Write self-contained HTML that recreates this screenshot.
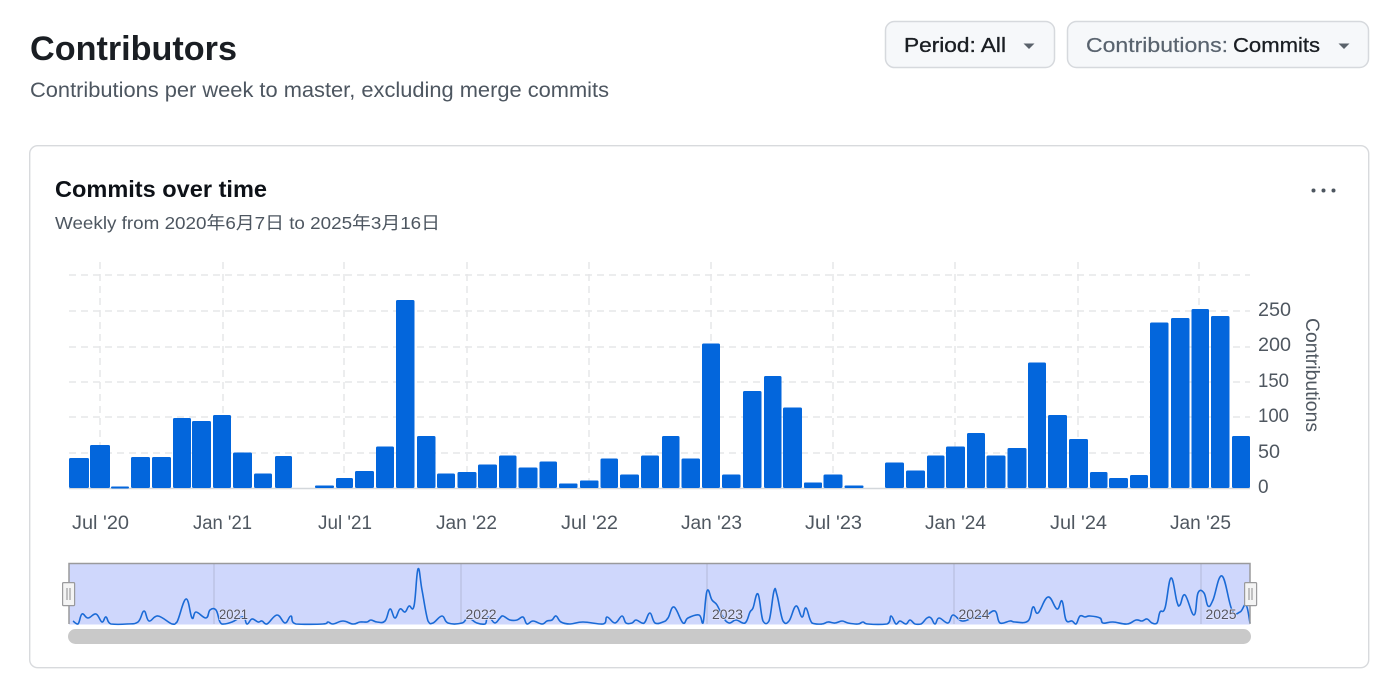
<!DOCTYPE html>
<html><head><meta charset="utf-8"><title>Contributors</title>
<style>
html,body{margin:0;padding:0;background:#fff;width:1400px;height:678px;overflow:hidden}
svg{display:block}
text{font-family:"Liberation Sans","Noto Sans CJK JP",sans-serif}
.ax{font-size:19px;fill:#4f5760}
.g{stroke:#e6e7e9;stroke-width:1.5;stroke-dasharray:7 5;fill:none}
.b rect{fill:#0366dc}
.yr{font-size:14px;fill:#55555f;paint-order:stroke;stroke:#dfe4fd;stroke-width:1.5px}
</style></head><body>
<svg width="1400" height="678" viewBox="0 0 1400 678" xmlns="http://www.w3.org/2000/svg">
<rect width="1400" height="678" fill="#fff"/>
<text x="30" y="60" font-size="34" font-weight="700" fill="#1a1e23" textLength="207" lengthAdjust="spacingAndGlyphs">Contributors</text>
<text x="30" y="97" font-size="21" fill="#4d5660" textLength="579" lengthAdjust="spacingAndGlyphs">Contributions per week to master, excluding merge commits</text>

<rect x="885.5" y="21.5" width="169" height="46" rx="9" fill="#f6f8fa" stroke="#d6d9dd" stroke-width="1.5"/>
<text x="904" y="52" font-size="20.5" fill="#1a1e23" stroke="#1a1e23" stroke-width=".35" textLength="102" lengthAdjust="spacingAndGlyphs">Period: All</text>
<path d="M1023.5 43.5h11l-5.5 5.5z" fill="#5a626b"/>
<rect x="1067.5" y="21.5" width="301" height="46" rx="9" fill="#f6f8fa" stroke="#d6d9dd" stroke-width="1.5"/>
<text x="1086" y="52" font-size="20.5" fill="#59636e" stroke="#59636e" stroke-width=".2" textLength="142" lengthAdjust="spacingAndGlyphs">Contributions:</text>
<text x="1233" y="52" font-size="20.5" fill="#1a1e23" stroke="#1a1e23" stroke-width=".3" textLength="87" lengthAdjust="spacingAndGlyphs">Commits</text>
<path d="M1338.5 43.5h11l-5.500 5.500z" fill="#5a626b"/>

<rect x="29.7" y="145.7" width="1339" height="522" rx="8" fill="#fff" stroke="#d8dadd" stroke-width="1.4"/>
<text x="55" y="197" font-size="23.5" font-weight="700" fill="#0d1117" textLength="212" lengthAdjust="spacingAndGlyphs">Commits over time</text>
<text x="55" y="229" font-size="17.5" fill="#4d5660" textLength="385" lengthAdjust="spacingAndGlyphs">Weekly from 2020年6月7日 to 2025年3月16日</text>
<circle cx="1313.5" cy="190.5" r="2" fill="#4d5660"/>
<circle cx="1323.5" cy="190.5" r="2" fill="#4d5660"/>
<circle cx="1333.5" cy="190.5" r="2" fill="#4d5660"/>

<path class="g" d="M69 275H1250M69 311H1250M69 347H1250M69 382H1250M69 417H1250M69 453H1250"/>
<path class="g" d="M100 262V488M223 262V488M344 262V488M467 262V488M589 262V488M711 262V488M833 262V488M955 262V488M1078 262V488M1199 262V488"/>
<path d="M69 488.5H1250" stroke="#d3d7db" stroke-width="1.5"/>

<g class="b">
<rect x="69" y="458" width="20" height="30" rx="1.5"/>
<rect x="90" y="445" width="20" height="43" rx="1.5"/>
<rect x="111" y="486.5" width="18" height="2" rx="1"/>
<rect x="131" y="457" width="19" height="31" rx="1.5"/>
<rect x="152" y="457" width="19" height="31" rx="1.5"/>
<rect x="173" y="418" width="18" height="70" rx="1.5"/>
<rect x="192" y="421" width="19" height="67" rx="1.5"/>
<rect x="213" y="415" width="18" height="73" rx="1.5"/>
<rect x="233" y="452.5" width="19" height="35.5" rx="1.5"/>
<rect x="254" y="473.5" width="18" height="14.5" rx="1.5"/>
<rect x="275" y="456" width="17" height="32" rx="1.5"/>
<rect x="315" y="485.5" width="19" height="2.5" rx="1"/>
<rect x="336" y="478" width="17" height="10" rx="1.5"/>
<rect x="355" y="471" width="19" height="17" rx="1.5"/>
<rect x="376" y="446.5" width="18" height="41.5" rx="1.5"/>
<rect x="396" y="300" width="18.5" height="188" rx="1.5"/>
<rect x="417" y="436" width="18.5" height="52" rx="1.5"/>
<rect x="437" y="473.5" width="18" height="14.5" rx="1.5"/>
<rect x="457.5" y="472" width="19" height="16" rx="1.5"/>
<rect x="478" y="464.5" width="19" height="23.5" rx="1.5"/>
<rect x="499" y="455.5" width="17.5" height="32.5" rx="1.5"/>
<rect x="518.5" y="467.5" width="19" height="20.5" rx="1.5"/>
<rect x="539.5" y="461.5" width="17.5" height="26.5" rx="1.5"/>
<rect x="559" y="483.5" width="18.5" height="4.5" rx="1"/>
<rect x="580" y="480.5" width="18.5" height="7.5" rx="1"/>
<rect x="600.5" y="458.5" width="17.5" height="29.5" rx="1.5"/>
<rect x="620" y="474.5" width="19" height="13.5" rx="1.5"/>
<rect x="641" y="455.5" width="18" height="32.5" rx="1.5"/>
<rect x="662" y="436" width="17.5" height="52" rx="1.5"/>
<rect x="681.5" y="458.5" width="18.5" height="29.5" rx="1.5"/>
<rect x="702" y="343.5" width="18" height="144.5" rx="1.5"/>
<rect x="722" y="474.5" width="18.5" height="13.5" rx="1.5"/>
<rect x="743" y="391" width="18.5" height="97" rx="1.5"/>
<rect x="764" y="376" width="17.5" height="112" rx="1.5"/>
<rect x="783" y="407.5" width="19" height="80.5" rx="1.5"/>
<rect x="804" y="482.5" width="18" height="5.5" rx="1"/>
<rect x="823.5" y="474.5" width="19" height="13.5" rx="1.5"/>
<rect x="844.5" y="485.5" width="19" height="2.5" rx="1"/>
<rect x="885" y="462.5" width="19" height="25.5" rx="1.5"/>
<rect x="906" y="470.5" width="19" height="17.5" rx="1.5"/>
<rect x="927" y="455.5" width="17.5" height="32.5" rx="1.5"/>
<rect x="946" y="446.5" width="19" height="41.5" rx="1.5"/>
<rect x="967" y="433" width="18" height="55" rx="1.5"/>
<rect x="986.5" y="455.5" width="19" height="32.5" rx="1.5"/>
<rect x="1007.5" y="448" width="19" height="40" rx="1.5"/>
<rect x="1028" y="362.5" width="18" height="125.5" rx="1.5"/>
<rect x="1048" y="415" width="19" height="73" rx="1.5"/>
<rect x="1069" y="439" width="19" height="49" rx="1.5"/>
<rect x="1090" y="472" width="17.5" height="16" rx="1.5"/>
<rect x="1109" y="478" width="19" height="10" rx="1.5"/>
<rect x="1130" y="475" width="18" height="13" rx="1.5"/>
<rect x="1150" y="322.5" width="18.5" height="165.5" rx="1.5"/>
<rect x="1171" y="318" width="18.5" height="170" rx="1.5"/>
<rect x="1191.5" y="309" width="17.5" height="179" rx="1.5"/>
<rect x="1211" y="316" width="18.5" height="172" rx="1.5"/>
<rect x="1232" y="436" width="18" height="52" rx="1.5"/>
</g>

<g class="ax">
<text x="1258" y="316" textLength="33" lengthAdjust="spacingAndGlyphs">250</text>
<text x="1258" y="351" textLength="33" lengthAdjust="spacingAndGlyphs">200</text>
<text x="1258" y="387" textLength="31" lengthAdjust="spacingAndGlyphs">150</text>
<text x="1258" y="422" textLength="31" lengthAdjust="spacingAndGlyphs">100</text>
<text x="1258" y="458" textLength="22" lengthAdjust="spacingAndGlyphs">50</text>
<text x="1258" y="493">0</text>
<text transform="translate(1306 318) rotate(90)" textLength="114" lengthAdjust="spacingAndGlyphs">Contributions</text>
</g>
<g class="ax">
<text x="72" y="529" textLength="57" lengthAdjust="spacingAndGlyphs">Jul '20</text>
<text x="193" y="529" textLength="59" lengthAdjust="spacingAndGlyphs">Jan '21</text>
<text x="318" y="529" textLength="54" lengthAdjust="spacingAndGlyphs">Jul '21</text>
<text x="436" y="529" textLength="61" lengthAdjust="spacingAndGlyphs">Jan '22</text>
<text x="561" y="529" textLength="57" lengthAdjust="spacingAndGlyphs">Jul '22</text>
<text x="681" y="529" textLength="61" lengthAdjust="spacingAndGlyphs">Jan '23</text>
<text x="805" y="529" textLength="57" lengthAdjust="spacingAndGlyphs">Jul '23</text>
<text x="925" y="529" textLength="61" lengthAdjust="spacingAndGlyphs">Jan '24</text>
<text x="1050" y="529" textLength="57" lengthAdjust="spacingAndGlyphs">Jul '24</text>
<text x="1170" y="529" textLength="61" lengthAdjust="spacingAndGlyphs">Jan '25</text>
</g>

<rect x="69" y="563.5" width="1181" height="61" fill="#cfd7fc"/>
<path d="M214 564V624M461 564V624M707 564V624M954 564V624M1201 564V624" stroke="#b3b9d8" stroke-width="1"/>
<polyline id="sp" fill="none" stroke="#1a6ad6" stroke-width="1.6" stroke-linejoin="round" stroke-linecap="round" points="73,621 78,624 82,614 88,618 96,614 102,622 106,617 111,624 127,624 138,622 144,611 149,621 158,616 172,624 177,622 186,599 192,618 196,612 206,618 210,610 216,610 220,622 224,624 232,622 243,617 247,624 252,619 258,622 262,621 267,624 277,615 285,623 291,616 296,624 323,624 328,622 333,624 343,621 353,624 360,622 367,622 371,620 377,622 385,621 390,609 395,618 400,609 405,612 409,606 414,606 418,569 422,590 428,621 433,623 442,616 448,623 462,623 468,618 477,623 485,624 487,618 490,618 495,623 500,618 503,616 510,620 517,620 523,617 527,624 533,621 542,624 547,621 552,620 556,616 561,622 570,624 583,622 603,624 607,617 615,623 622,616 626,623 632,623 636,620 642,623 645,622 650,613 655,623 663,622 668,618 674,607 683,623 688,618 699,615 703,623 707,591 712,600 717,605 723,617 729,623 736,620 745,623 750,612 753,608 758,594 763,621 769,621 774,591 777,595 783,621 789,621 796,606 802,617 806,608 812,623 822,624 828,622 835,623 842,621 848,623 858,624 863,622 868,624 887,624 891,616 896,624 900,621 906,624 910,620 915,624 921,624 927,618 931,618 935,624 939,618 948,623 953,615 962,621 973,618 985,616 995,611 1000,623 1010,621 1015,622 1028,621 1033,607 1038,613 1048,597 1057,609 1062,601 1066,620 1072,621 1076,624 1080,616 1085,617 1090,616 1100,618 1103,623 1113,622 1127,624 1136,620 1142,621 1147,619 1152,623 1157,623 1160,612 1165,608 1171,578 1177,602 1180,605 1185,595 1194,615 1198,593 1204,593 1208,606 1213,600 1222,576 1232,610 1240,612 1246,605 1250,623"/>
<path d="M69 624V563.5H1250V624" fill="none" stroke="#9a9a9c" stroke-width="1.5"/>
<g class="yr">
<text x="219" y="619" textLength="29" lengthAdjust="spacingAndGlyphs">2021</text>
<text x="465.5" y="619" textLength="31" lengthAdjust="spacingAndGlyphs">2022</text>
<text x="712" y="619" textLength="31" lengthAdjust="spacingAndGlyphs">2023</text>
<text x="958.5" y="619" textLength="31" lengthAdjust="spacingAndGlyphs">2024</text>
<text x="1205.5" y="619" textLength="31" lengthAdjust="spacingAndGlyphs">2025</text>
</g>
<rect x="62.6" y="582.6" width="12" height="23" rx="1" fill="#f4f4f4" stroke="#9a9a9c" stroke-width="1.2"/>
<rect x="1244.6" y="582.6" width="12" height="23" rx="1" fill="#f4f4f4" stroke="#9a9a9c" stroke-width="1.2"/>
<path d="M67 588V600M70 588V600M1249 588V600M1252 588V600" stroke="#8c8c8e" stroke-width="1"/>
<rect x="68" y="629" width="1183" height="15" rx="7.5" fill="#c9c9c9"/>
</svg>
<script>
var e=document.getElementById('sp'),p=e.getAttribute('points').trim().split(/\s+/).map(function(s){return s.split(',').map(Number)});
var d='M'+p[0][0]+' '+p[0][1];
for(var i=0;i<p.length-1;i++){var a=p[i?i-1:0],b=p[i],c=p[i+1],f=p[i+2]||c,t=5;
d+='C'+(b[0]+(c[0]-a[0])/t).toFixed(1)+' '+Math.min(624.5,b[1]+(c[1]-a[1])/t).toFixed(1)+' '+(c[0]-(f[0]-b[0])/t).toFixed(1)+' '+Math.min(624.5,c[1]-(f[1]-b[1])/t).toFixed(1)+' '+c[0]+' '+c[1];}
var n=document.createElementNS('http://www.w3.org/2000/svg','path');
n.setAttribute('d',d);n.setAttribute('fill','none');n.setAttribute('stroke','#1a6ad6');n.setAttribute('stroke-width','1.6');
e.parentNode.replaceChild(n,e);
</script>
</body></html>
